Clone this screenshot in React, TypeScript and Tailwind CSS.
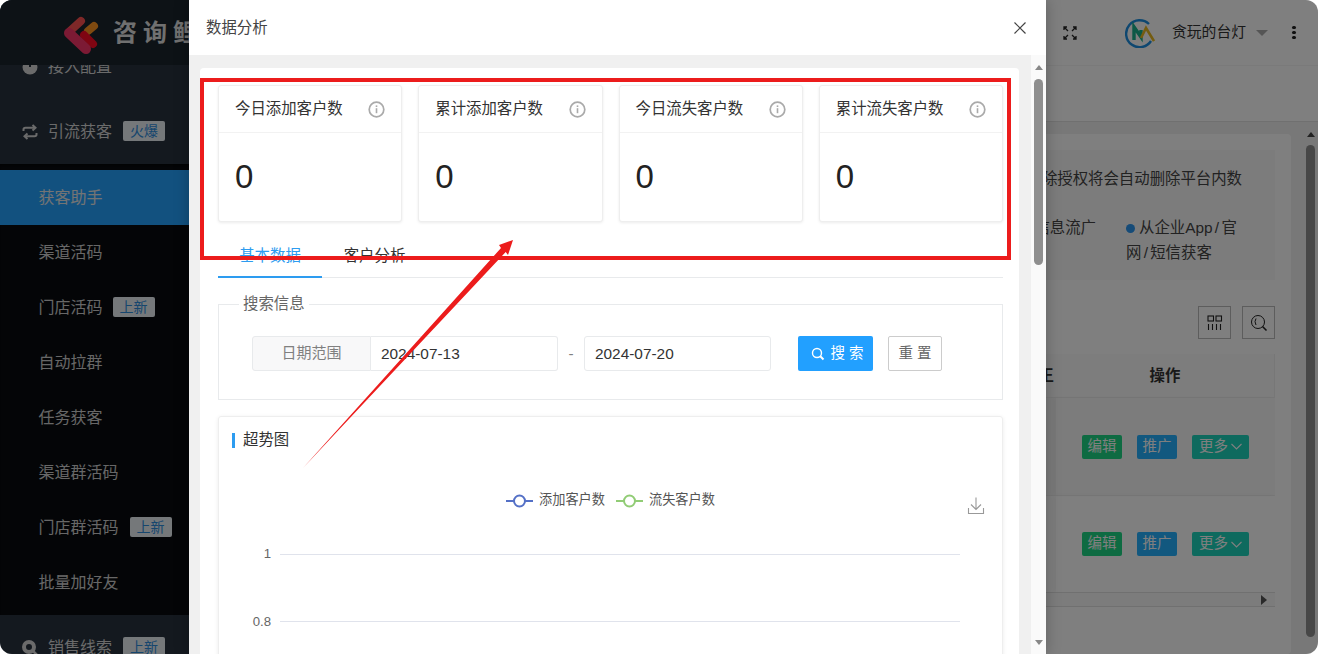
import React from "react";

const FONT = "font-['Liberation_Sans','Noto_Sans_CJK_SC',sans-serif]";

function InfoIcon() {
  return (
    <svg width="17" height="17" viewBox="0 0 17 17" fill="none">
      <circle cx="8.5" cy="8.5" r="7.3" stroke="#aaaaaa" strokeWidth="1.7" />
      <rect x="7.7" y="7.2" width="1.6" height="5" fill="#aaaaaa" />
      <rect x="7.7" y="4.4" width="1.6" height="1.6" fill="#aaaaaa" />
    </svg>
  );
}

function StatCard({ title }: { title: string }) {
  return (
    <div className="flex-1 h-[137px] bg-white border border-[#eeeeee] rounded-[3px] shadow-[0_1px_3px_rgba(0,0,0,0.08)] flex flex-col">
      <div className="h-[47px] border-b border-[#f2f2f2] flex items-center justify-between pl-[16px] pr-[16px] text-[15.4px] text-[#333333]">
        <span>{title}</span>
        <InfoIcon />
      </div>
      <div className="flex-1 pl-[16px] pt-[22px] text-[33px] leading-[44px] text-[#222222]">0</div>
    </div>
  );
}

function Tag({ text, extra }: { text: string; extra?: boolean }) {
  return (
    <span className={"inline-flex items-center justify-center w-[42px] h-[20px] mb-[2px] rounded-[2px] bg-[#eaf0f5] text-[#2d8cdc] text-[14px] leading-none " + (extra ? "ml-[11px]" : "ml-[10px]")}>
      {text}
    </span>
  );
}

function SideRow({ label, tag, icon }: { label: string; tag?: string; icon: React.ReactNode }) {
  return (
    <div className="h-[65px] shrink-0 flex items-center pl-[22px] text-[16px] text-[#d6d6d6]">
      <span className="w-[26px] flex items-center">{icon}</span>
      <span>{label}</span>
      {tag && <Tag text={tag} extra />}
    </div>
  );
}

function SubRow({ label, tag, active }: { label: string; tag?: string; active?: boolean }) {
  return (
    <div className={"h-[55px] shrink-0 flex items-center pl-[38.5px] text-[16px] " + (active ? "bg-[#25a3ff] text-[#e8e8e8]" : "text-[#cfcfcf]")}>
      <span>{label}</span>
      {tag && <Tag text={tag} extra={label.length > 4} />}
    </div>
  );
}

function Sidebar() {
  return (
    <aside className="w-[220px] shrink-0 flex flex-col bg-[#29333f] overflow-hidden">
      <div className="relative z-10 h-[65px] shrink-0 bg-[#1a242c] flex items-center pl-[64px]">
        <svg width="36" height="44" viewBox="0 0 36 44" fill="none" strokeLinecap="round" className="shrink-0">
          <path d="M6 20 L17 10" stroke="#ff5050" strokeWidth="8" />
          <path d="M24 20 L30 15" stroke="#ff9420" strokeWidth="8" />
          <path d="M20 24 L29 33" stroke="#ff0a24" strokeWidth="8" />
          <path d="M5 22 L22 38" stroke="#f83468" strokeWidth="10" />
        </svg>
        <span className="ml-[13px] whitespace-nowrap text-[24px] font-bold tracking-[6px] text-[#e0e0e0]">咨询鲤</span>
      </div>
      <div className="flex flex-col -mt-[31px]">
        <SideRow
          label="接入配置"
          icon={
            <svg width="16" height="16" viewBox="0 0 16 16">
              <circle cx="8" cy="8" r="7.5" fill="#d6d6d6" />
              <rect x="7" y="2" width="2" height="6" fill="#29333f" />
            </svg>
          }
        />
        <SideRow
          label="引流获客"
          tag="火爆"
          icon={
            <svg width="16" height="16" viewBox="0 0 16 16" fill="none" stroke="#d6d6d6" strokeWidth="2">
              <path d="M1.5 7 V5.5 Q1.5 3.8 3.5 3.8 H13" />
              <path d="M10.5 1 L13.5 3.8 L10.5 6.5" />
              <path d="M14.5 9 V10.5 Q14.5 12.2 12.5 12.2 H3" />
              <path d="M5.5 9.5 L2.5 12.2 L5.5 15" />
            </svg>
          }
        />
        <div className="bg-[#090b0f] pt-[6px] pb-[5px] flex flex-col shadow-[inset_0_2px_3px_rgba(0,0,0,0.4)]">
          <SubRow label="获客助手" active />
          <SubRow label="渠道活码" />
          <SubRow label="门店活码" tag="上新" />
          <SubRow label="自动拉群" />
          <SubRow label="任务获客" />
          <SubRow label="渠道群活码" />
          <SubRow label="门店群活码" tag="上新" />
          <SubRow label="批量加好友" />
        </div>
        <SideRow
          label="销售线索"
          tag="上新"
          icon={
            <svg width="16" height="16" viewBox="0 0 16 16" fill="none">
              <circle cx="7" cy="7" r="5" stroke="#d6d6d6" strokeWidth="4" />
              <path d="M11 11 L15 15" stroke="#d6d6d6" strokeWidth="2.5" />
            </svg>
          }
        />
      </div>
    </aside>
  );
}

function RowButtons() {
  return (
    <div className="flex items-center gap-[15px] text-[14.5px] text-white">
      <span className="w-[40px] h-[24px] rounded-[2px] bg-[#1cd685] flex items-center justify-center">编辑</span>
      <span className="w-[40px] h-[24px] rounded-[2px] bg-[#24b0ff] flex items-center justify-center">推广</span>
      <span className="w-[57px] h-[24px] rounded-[2px] bg-[#1dd4bc] flex items-center justify-center gap-[3px]">
        更多
        <svg width="11" height="7" viewBox="0 0 11 7" fill="none" stroke="#ffffff" strokeWidth="1.1">
          <path d="M0.5 1 L5.5 6 L10.5 1" />
        </svg>
      </span>
    </div>
  );
}

function MainArea() {
  return (
    <main className="flex-1 min-w-0 flex flex-col bg-white">
      <div className="h-[66px] shrink-0 border-b border-[#f4f4f4] flex items-center justify-end text-[#333333]">
        <svg width="14" height="14" viewBox="0 0 14 14" fill="none" stroke="#222222" strokeWidth="1.3" className="mr-[48px]">
          <path d="M5 5 L1 1 M1 4 V1 H4" />
          <path d="M9 5 L13 1 M10 1 H13 V4" />
          <path d="M5 9 L1 13 M1 10 V13 H4" />
          <path d="M9 9 L13 13 M10 13 H13 V10" />
        </svg>
        <svg width="30" height="30" viewBox="0 0 30 30" fill="none" className="mr-[17px]">
          <path d="M24 6 A13.5 13.5 0 1 0 26 23" stroke="#1d8fe0" strokeWidth="2.4" />
          <path d="M9 22 V9 L16 19 V12" stroke="#18b08c" strokeWidth="3.4" />
          <path d="M16 20 L21 10 L29 23" stroke="#e8b820" strokeWidth="2.6" />
        </svg>
        <span className="text-[14.8px] mr-[10px]">贪玩的台灯</span>
        <span className="w-0 h-0 border-x-[6px] border-x-transparent border-t-[6px] border-t-[#aaaaaa] mr-[24px]" />
        <span className="flex flex-col gap-[2px] mr-[22px]">
          <span className="w-[4px] h-[3px] rounded-full bg-[#222222]" />
          <span className="w-[4px] h-[3px] rounded-full bg-[#222222]" />
          <span className="w-[4px] h-[3px] rounded-full bg-[#222222]" />
        </span>
      </div>
      <div className="h-[56px] shrink-0 border-b border-[#e0e0e0] bg-white" />
      <div className="flex-1 min-h-0 flex bg-[#f0f0f0]">
        <div className="flex-1 min-w-0 pt-[12px] pr-[12px]">
          <div className="h-full bg-white rounded-[4px] pt-[16px] pr-[16px] flex flex-col items-end text-[#333333]">
            <div className="w-[400px] h-[130px] bg-[#f9f9f9] pt-[17px] text-[15.4px] overflow-hidden">
              <div className="text-right pr-[33px] whitespace-nowrap text-[#444444]">解除授权将会自动删除平台内数</div>
              <div className="flex mt-[25px] leading-[25px] text-[#444444]">
                <div className="w-[221px] text-right whitespace-nowrap">信息流广</div>
                <div className="w-[120px] ml-[30px] [word-spacing:-2px]">
                  <span className="inline-block w-[9px] h-[9px] rounded-full bg-[#2a96f0] mr-[4px]" />
                  从企业App / 官网 / 短信获客
                </div>
              </div>
            </div>
            <div className="flex gap-[11px] mt-[26px]">
              <span className="w-[33px] h-[33px] border border-[#bbbbbb] flex items-center justify-center">
                <svg width="16" height="16" viewBox="0 0 16 16" fill="none" stroke="#222222" strokeWidth="1.1">
                  <rect x="1" y="1" width="5.5" height="5" />
                  <rect x="9" y="1" width="5.5" height="5" />
                  <path d="M1.5 9 V15 M5.5 9 V15 M9.5 9 V15 M13.5 9 V15" />
                </svg>
              </span>
              <span className="w-[33px] h-[33px] border border-[#bbbbbb] flex items-center justify-center">
                <svg width="18" height="18" viewBox="0 0 18 18" fill="none" stroke="#222222" strokeWidth="1">
                  <circle cx="8" cy="8" r="6.5" />
                  <path d="M6 4.5 Q4 7.5 6 11" />
                  <path d="M12.5 12.5 L16.5 16.5" strokeWidth="1.6" />
                </svg>
              </span>
            </div>
            <div className="w-[400px] mt-[15px] flex flex-col">
              <div className="flex h-[43px] bg-[#fbfbfb]">
                <div className="flex-1 flex items-center justify-end text-[15.4px] font-bold whitespace-nowrap overflow-hidden pr-[2px]">王</div>
                <div className="w-[219px] flex items-center justify-center text-[15.4px] font-bold border-r border-[#eeeeee]">操作</div>
              </div>
              <div className="flex h-[98px] bg-[#f8f8f8] border-t border-[#eeeeee]">
                <div className="flex-1" />
                <div className="w-[219px] pl-[26px] flex items-center shadow-[-3px_0_4px_rgba(0,0,0,0.04)]"><RowButtons /></div>
              </div>
              <div className="flex h-[97px] border-t border-[#eeeeee]">
                <div className="flex-1" />
                <div className="w-[219px] pl-[26px] flex items-center shadow-[-3px_0_4px_rgba(0,0,0,0.04)]"><RowButtons /></div>
              </div>
              <div className="h-[15px] bg-[#f8f8f8] border-y border-[#e0e0e0] flex items-center justify-end pr-[8px]">
                <span className="w-0 h-0 border-y-[5px] border-y-transparent border-l-[6px] border-l-[#555555]" />
              </div>
            </div>
          </div>
        </div>
        <div className="w-[15px] shrink-0 flex flex-col items-center bg-[#f0f0f0] pt-[10px]">
          <span className="w-0 h-0 border-x-[4px] border-x-transparent border-b-[5px] border-b-[#444444]" />
          <span className="w-[9px] h-[492px] mt-[8px] rounded-full bg-[#8e8e8e]" />
        </div>
      </div>
    </main>
  );
}

function Modal() {
  return (
    <div className="absolute left-[189px] top-0 bottom-0 w-[857px] bg-white flex flex-col shadow-[0_0_14px_rgba(0,0,0,0.25)] text-[#333333]">
      <div className="h-[55px] shrink-0 flex items-center justify-between pl-[17px] pr-[19px]">
        <span className="text-[15.4px] text-[#444444]">数据分析</span>
        <svg width="14" height="14" viewBox="0 0 14 14" fill="none" stroke="#444444" strokeWidth="1.2">
          <path d="M1.5 1.5 L12.5 12.5 M12.5 1.5 L1.5 12.5" />
        </svg>
      </div>
      <div className="flex-1 min-h-0 flex bg-[#f0f0f0]">
        <div className="flex-1 min-w-0 pt-[13px] pl-[11px] overflow-hidden">
          <div className="w-[819px] bg-white rounded-t-[4px] pt-[17px] pl-[18px] pr-[16px] h-[700px] flex flex-col">
            <div className="flex gap-[16px]">
              <StatCard title="今日添加客户数" />
              <StatCard title="累计添加客户数" />
              <StatCard title="今日流失客户数" />
              <StatCard title="累计流失客户数" />
            </div>
            <div className="mt-[19px] h-[37px] border-b border-[#e8eaec] flex text-[15.4px]">
              <div className="w-[104px] h-[37px] border-b-2 border-[#2d9cf0] text-[#2d9cf0] flex items-start justify-center pt-[3px]">基本数据</div>
              <div className="w-[105px] h-[37px] text-[#333333] flex items-start justify-center pt-[3px]">客户分析</div>
            </div>
            <fieldset className="mt-[15px] h-[107px] border border-[#e8eaec] px-[33px]">
              <legend className="-ml-[13px] px-[4px] text-[15.4px] leading-[22px] text-[#666666]">搜索信息</legend>
              <div className="mt-[21px] flex items-center h-[35px] text-[15.4px]">
                <div className="w-[119px] h-[35px] bg-[#f8f8f9] border border-[#e8eaec] rounded-l-[3px] flex items-center justify-center text-[15px] text-[#808080]">日期范围</div>
                <div className="w-[187px] h-[35px] border border-l-0 border-[#e8eaec] rounded-r-[3px] flex items-center pl-[10px]">2024-07-13</div>
                <div className="w-[26px] text-center text-[#808080]">-</div>
                <div className="w-[187px] h-[35px] border border-[#e8eaec] rounded-[3px] flex items-center pl-[10px]">2024-07-20</div>
                <div className="ml-[27px] w-[75px] h-[35px] bg-[#22a0ff] rounded-[2px] text-white text-[14.5px] flex items-center justify-center gap-[5px] pl-[4px]">
                  <svg width="14" height="14" viewBox="0 0 14 14" fill="none" stroke="#ffffff" strokeWidth="1.4">
                    <circle cx="6" cy="6" r="4.5" />
                    <path d="M9.3 9.3 L12.5 12.5" strokeWidth="2" />
                  </svg>
                  <span>搜 索</span>
                </div>
                <div className="ml-[15px] w-[54px] h-[35px] border border-[#cccccc] rounded-[2px] text-[14.5px] flex items-center justify-center text-[#666666]">重 置</div>
              </div>
            </fieldset>
            <div className="mt-[16px] border border-[#eeeeee] shadow-[0_1px_4px_rgba(0,0,0,0.08)] rounded-t-[3px] flex-1 flex flex-col">
              <div className="h-[46px] flex items-center pl-[13px] text-[15.4px] text-[#333333]">
                <span className="w-[3px] h-[15px] bg-[#2d9cf0] mr-[8px]" />
                超势图
              </div>
              <div className="mt-[26px] grid grid-cols-[1fr_auto_1fr] text-[13.2px] text-[#555555]">
                <div />
                <div className="flex items-center gap-[11px] h-[24px]">
                  <div className="flex items-center gap-[6px]">
                    <svg width="27" height="14" viewBox="0 0 27 14" fill="none" stroke="#5470c6" strokeWidth="2">
                      <path d="M0 7 H8 M19 7 H27" />
                      <circle cx="13.5" cy="7" r="5.5" />
                    </svg>
                    <span className="-mt-[3px]">添加客户数</span>
                  </div>
                  <div className="flex items-center gap-[6px]">
                    <svg width="27" height="14" viewBox="0 0 27 14" fill="none" stroke="#91cc75" strokeWidth="2">
                      <path d="M0 7 H8 M19 7 H27" />
                      <circle cx="13.5" cy="7" r="5.5" />
                    </svg>
                    <span className="-mt-[3px]">流失客户数</span>
                  </div>
                </div>
                <div className="flex justify-end pr-[17px] pt-[8px]">
                  <svg width="18" height="18" viewBox="0 0 18 18" fill="none" stroke="#999999" strokeWidth="1.1">
                    <path d="M9 0.5 V12 M4 7.5 L9 12.5 L14 7.5" />
                    <path d="M1.5 11 V16.5 H16.5 V11" />
                  </svg>
                </div>
              </div>
              <svg width="783" height="130" viewBox="0 0 783 130" className="block">
                <path d="M61 39.5 H741 M61 106.5 H741" stroke="#e0e3ec" strokeWidth="1" />
                <text x="52" y="43" textAnchor="end" fontSize="13.2" fill="#666666">1</text>
                <text x="52" y="111" textAnchor="end" fontSize="13.2" fill="#666666">0.8</text>
              </svg>
            </div>
          </div>
        </div>
        <div className="w-[15px] shrink-0 bg-[#fafafa] flex flex-col items-center justify-between pt-[10px] pb-[9px]">
          <div className="flex flex-col items-center">
            <span className="w-0 h-0 border-x-[4px] border-x-transparent border-b-[5px] border-b-[#888888]" />
            <span className="w-[9px] h-[186px] mt-[9px] rounded-full bg-[#8f8f8f]" />
          </div>
          <span className="w-0 h-0 border-x-[4px] border-x-transparent border-t-[5px] border-t-[#888888]" />
        </div>
      </div>
    </div>
  );
}

export default function App() {
  return (
    <div className={"relative w-[1318px] h-[654px] overflow-hidden bg-white " + FONT}>
      <div className="absolute inset-0 isolate rounded-[12px] overflow-hidden flex">
        <Sidebar />
        <MainArea />
        <div className="absolute inset-0 z-20 bg-black/50" />
      </div>
      <Modal />
      <div className="absolute left-[200px] top-[78px] w-[811px] h-[182px] border-4 border-[#ec1c1c] pointer-events-none" />
      <svg className="absolute left-0 top-0 pointer-events-none" width="1318" height="654" viewBox="0 0 1318 654">
        <polygon points="303,468 501,248 499,245 513,240 508,255 505.7,252" fill="#ec1c1c" />
      </svg>
    </div>
  );
}
